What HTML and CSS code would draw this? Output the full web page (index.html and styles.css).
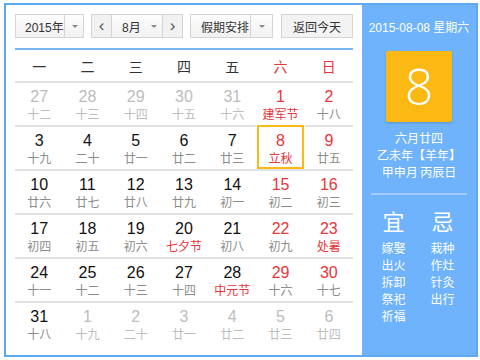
FILE: index.html
```html
<!DOCTYPE html>
<html lang="zh-CN">
<head>
  <meta charset="UTF-8">
  <title>万年历</title>
  <link rel="stylesheet" href="styles.css">
</head>
<body>
  <div class="frame">
    <div class="main">
      <div class="toolbar">
        <div class="sel year"><span class="val">2015年</span><span class="drop"><i class="tri"></i></span></div>
        <div class="sel month">
          <span class="nav">&lsaquo;</span>
          <span class="val">8月</span><span class="drop inline"><i class="tri"></i></span>
          <span class="nav next">&rsaquo;</span>
        </div>
        <div class="sel holiday"><span class="val">假期安排</span><span class="drop"><i class="tri"></i></span></div>
        <div class="btn">返回今天</div>
      </div>

      <div class="week">
        <span>一</span><span>二</span><span>三</span><span>四</span><span>五</span><span class="red">六</span><span class="red">日</span>
      </div>

      <div class="grid">
        <div class="cell other"><b>27</b><small>十二</small></div>
        <div class="cell other"><b>28</b><small>十三</small></div>
        <div class="cell other"><b>29</b><small>十四</small></div>
        <div class="cell other"><b>30</b><small>十五</small></div>
        <div class="cell other"><b>31</b><small>十六</small></div>
        <div class="cell wkd"><b>1</b><small class="fest">建军节</small></div>
        <div class="cell wkd"><b>2</b><small>十八</small></div>

        <div class="cell"><b>3</b><small>十九</small></div>
        <div class="cell"><b>4</b><small>二十</small></div>
        <div class="cell"><b>5</b><small>廿一</small></div>
        <div class="cell"><b>6</b><small>廿二</small></div>
        <div class="cell"><b>7</b><small>廿三</small></div>
        <div class="cell wkd today"><b>8</b><small class="fest">立秋</small></div>
        <div class="cell wkd"><b>9</b><small>廿五</small></div>

        <div class="cell"><b>10</b><small>廿六</small></div>
        <div class="cell"><b>11</b><small>廿七</small></div>
        <div class="cell"><b>12</b><small>廿八</small></div>
        <div class="cell"><b>13</b><small>廿九</small></div>
        <div class="cell"><b>14</b><small>初一</small></div>
        <div class="cell wkd"><b>15</b><small>初二</small></div>
        <div class="cell wkd"><b>16</b><small>初三</small></div>

        <div class="cell"><b>17</b><small>初四</small></div>
        <div class="cell"><b>18</b><small>初五</small></div>
        <div class="cell"><b>19</b><small>初六</small></div>
        <div class="cell"><b>20</b><small class="fest">七夕节</small></div>
        <div class="cell"><b>21</b><small>初八</small></div>
        <div class="cell wkd"><b>22</b><small>初九</small></div>
        <div class="cell wkd"><b>23</b><small class="fest">处暑</small></div>

        <div class="cell"><b>24</b><small>十一</small></div>
        <div class="cell"><b>25</b><small>十二</small></div>
        <div class="cell"><b>26</b><small>十三</small></div>
        <div class="cell"><b>27</b><small>十四</small></div>
        <div class="cell"><b>28</b><small class="fest">中元节</small></div>
        <div class="cell wkd"><b>29</b><small>十六</small></div>
        <div class="cell wkd"><b>30</b><small>十七</small></div>

        <div class="cell"><b>31</b><small>十八</small></div>
        <div class="cell other"><b>1</b><small>十九</small></div>
        <div class="cell other"><b>2</b><small>二十</small></div>
        <div class="cell other"><b>3</b><small>廿一</small></div>
        <div class="cell other"><b>4</b><small>廿二</small></div>
        <div class="cell other"><b>5</b><small>廿三</small></div>
        <div class="cell other"><b>6</b><small>廿四</small></div>
      </div>
    </div>

    <div class="side">
      <div class="date">2015-08-08 星期六</div>
      <div class="bigday">8</div>
      <div class="lunar">
        <p>六月廿四</p>
        <p>乙未年【羊年】</p>
        <p>甲申月 丙辰日</p>
      </div>
      <div class="sep"></div>
      <div class="yiji">
        <div class="col">
          <h3>宜</h3>
          <p>嫁娶</p><p>出火</p><p>拆卸</p><p>祭祀</p><p>祈福</p>
        </div>
        <div class="col">
          <h3>忌</h3>
          <p>栽种</p><p>作灶</p><p>针灸</p><p>出行</p>
        </div>
      </div>
    </div>
  </div>
</body>
</html>
```

FILE: styles.css
```css
body, html {
  margin: 0;
  padding: 0;
  background: #fff;
  font-family: "Liberation Sans", "Noto Sans CJK SC", sans-serif;
}
.frame {
  margin: 3px 0 0 4px;
  width: 474px;
  height: 354px;
  box-sizing: border-box;
  border: 2px solid #5fa8f4;
  display: flex;
}
.main {
  width: 356px;
  padding: 9px 9px 0 9px;
  box-sizing: border-box;
}

/* toolbar */
.toolbar {
  display: flex;
  height: 24px;
  font-size: 12px;
  color: #333;
  white-space: nowrap;
}
.sel, .btn {
  display: flex;
  align-items: center;
  box-sizing: border-box;
  height: 24px;
  border: 1px solid #d4d4d4;
  background: linear-gradient(#fdfdfd, #f1f1f1);
}
.sel .val {
  flex: 1;
  padding-left: 9px;
}
.drop {
  flex: none;
  width: 21px;
  height: 100%;
  border-left: 1px solid #d4d4d4;
  display: flex;
  align-items: center;
  justify-content: center;
}
.drop.inline {
  border-left: none;
  width: 16px;
}
.tri {
  width: 0;
  height: 0;
  border-left: 3px solid transparent;
  border-right: 3px solid transparent;
  border-top: 3px solid #888;
}
.year { width: 69px; }
.month { width: 92px; margin-left: 7px; }
.month .val { padding-left: 10px; }
.nav {
  flex: none;
  width: 19px;
  height: 100%;
  display: flex;
  align-items: center;
  justify-content: center;
  font-size: 17px;
  color: #555;
  background: #f1f1f1;
  border-right: 1px solid #d4d4d4;
}
.nav.next {
  border-right: none;
  border-left: 1px solid #d4d4d4;
}
.holiday { width: 83px; margin-left: 7px; }
.holiday .val { padding-left: 10px; }
.btn {
  width: 72px;
  margin-left: 8px;
  justify-content: center;
  background: #f3f3f3;
}

/* week header */
.week {
  margin-top: 10px;
  border-top: 2px solid #78b5f3;
  display: grid;
  grid-template-columns: repeat(7, 1fr);
  height: 31px;
  align-items: center;
  text-align: center;
  font-size: 14px;
  color: #333;
  font-family: "Noto Sans CJK SC", sans-serif;
}
.red { color: #e8343a; }

/* days */
.grid {
  display: grid;
  grid-template-columns: repeat(7, 1fr);
}
.cell {
  height: 44px;
  box-sizing: border-box;
  border-top: 2px solid #e2e2e2;
  text-align: center;
  padding-top: 5px;
}
.cell b {
  display: block;
  font-weight: normal;
  font-size: 16px;
  line-height: 18px;
  color: #111;
}
.cell small {
  display: block;
  font-size: 12px;
  line-height: 16px;
  color: #8c8c8c;
  font-family: "Noto Sans CJK SC", sans-serif;
}
.cell.wkd b { color: #e8343a; }
.cell.other b, .cell.other small { color: #bdbdbd; }
.cell small.fest { color: #e8343a; }
.cell.today {
  border: 2px solid #fdb913;
  margin: 0 1px;
}

/* side panel */
.side {
  flex: 1;
  background: #6eb3fb;
  color: #fff;
  text-align: center;
  font-family: "Noto Sans CJK SC", sans-serif;
}
.date {
  margin-top: 14px;
  font-size: 12px;
  line-height: 18px;
  font-family: "Liberation Sans", "Noto Sans CJK SC", sans-serif;
}
.bigday {
  margin: 14px auto 0;
  width: 66px;
  height: 71px;
  background: #fdb913;
  border-radius: 2px;
  box-shadow: 0 1px 2px rgba(0, 0, 0, 0.2);
  font-family: "Open Sans", sans-serif;
  font-weight: 300;
  font-size: 50px;
  line-height: 71px;
}
.lunar {
  margin-top: 7px;
  font-size: 12px;
}
.lunar p {
  margin: 0;
  line-height: 17px;
}
.sep {
  margin: 13px 9px 0;
  height: 2px;
  background: #a3cdf8;
}
.yiji {
  display: flex;
  justify-content: center;
  gap: 25px;
  margin-top: 11px;
  padding-right: 2px;
}
.col h3 {
  margin: 0 0 5px;
  font-size: 22px;
  line-height: 28px;
  font-weight: normal;
}
.col p {
  margin: 0;
  font-size: 12px;
  line-height: 17px;
}
```
